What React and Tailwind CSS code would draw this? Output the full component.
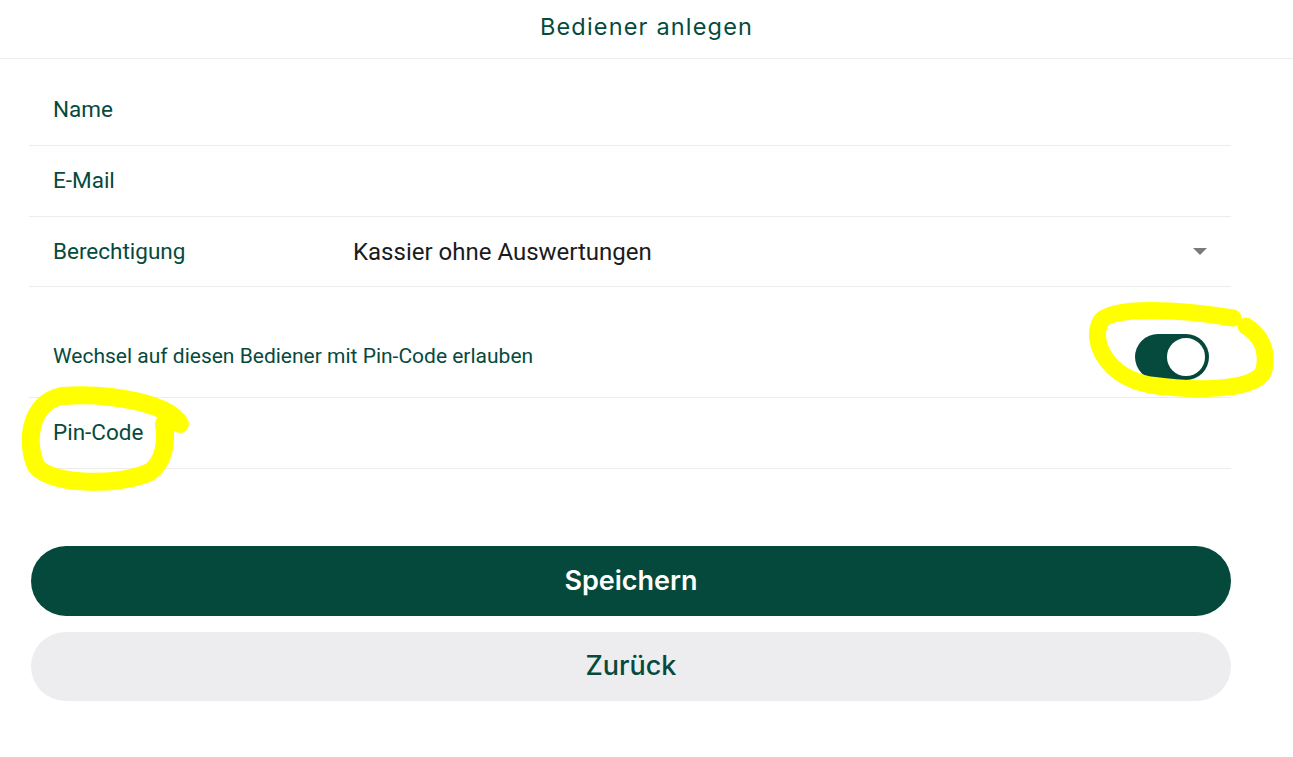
import { useState } from 'react'

const green = 'text-[#064a3d]'

function Row({ label, children, className = '' }) {
  return (
    <div className={`flex items-center border-b border-[#ececec] ${className}`}>
      <div className={`w-[324px] pl-6 text-[22.5px] ${green}`}>{label}</div>
      <div className="flex-1">{children}</div>
    </div>
  )
}

function App() {
  const [pinEnabled, setPinEnabled] = useState(true)

  return (
    <div className="relative min-h-screen bg-white font-['Roboto',sans-serif]">
      <div className="h-[59px] pb-[4px] border-b border-[#ececec] flex items-center justify-center">
        <h1 className={`font-['Inter',sans-serif] text-[23.5px] tracking-[0.05em] ${green}`}>Bediener anlegen</h1>
      </div>

      <div className="pl-[29px] pr-[62px] pt-[16px]">
        <Row label="Name" className="h-[71px]" />
        <Row label="E-Mail" className="h-[71px]" />
        <Row label="Berechtigung" className="h-[70px]">
          <div className="flex items-center justify-between pr-6">
            <span className="text-[24px] text-[#1b1b1b]">Kassier ohne Auswertungen</span>
            <span className="w-0 h-0 border-l-[7px] border-r-[7px] border-t-[7px] border-l-transparent border-r-transparent border-t-[#7a7a7a]" />
          </div>
        </Row>

        {/* Pin-Code Schalter */}
        <div className="h-[111px] pt-[30px] flex items-center justify-between border-b border-[#ececec] pl-6 pr-[22px]">
          <span className={`text-[21px] ${green}`}>Wechsel auf diesen Bediener mit Pin-Code erlauben</span>
          <button
            onClick={() => setPinEnabled(!pinEnabled)}
            className={`w-[74px] h-[46px] rounded-full flex items-center p-[2px] ${pinEnabled ? 'bg-[#064a3d] justify-end' : 'bg-[#cfcfcf] justify-start'}`}
          >
            <span className="w-[42px] h-[42px] rounded-full bg-white border-2 border-[#064a3d] shadow" />
          </button>
        </div>

        <Row label="Pin-Code" className="h-[71px]" />

        <div className="mt-[77px] pl-[2px] flex flex-col gap-4">
          <button className="h-[70px] w-full rounded-full bg-[#04493b] text-white font-['Inter',sans-serif] font-semibold text-[27px]">
            Speichern
          </button>
          <button className={`h-[69px] w-full rounded-full bg-[#ededef] font-['Inter',sans-serif] font-medium text-[27px] ${green}`}>
            Zurück
          </button>
        </div>
      </div>

      {/* Markierungen */}
      <svg className="absolute inset-0 pointer-events-none" width="1293" height="757">
        <g fill="none" stroke="#ffff00" strokeLinecap="round" strokeLinejoin="round">
          <path strokeWidth="17" d="M 1233 318 C 1180 309, 1112 306, 1101 321 C 1090 340, 1105 376, 1150 385 C 1200 392, 1258 390, 1264 370 C 1268 352, 1262 336, 1246 326" />
          <path strokeWidth="18" d="M 180 424 C 170 404, 110 392, 62 396 C 30 402, 25 442, 36 466 C 52 486, 120 486, 150 472 C 164 462, 167 442, 164 424" />
        </g>
      </svg>
    </div>
  )
}

export default App
